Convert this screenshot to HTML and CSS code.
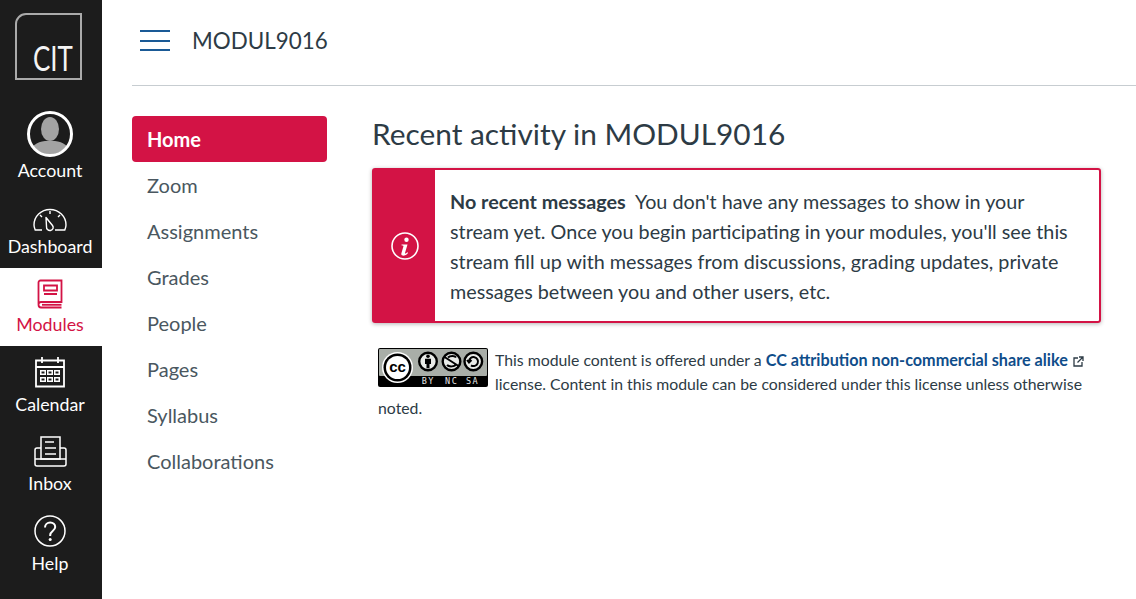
FILE: index.html
```html
<!DOCTYPE html>
<html lang="en">
<head>
    <meta charset="UTF-8">
    <title>MODUL9016</title>
    <link rel="stylesheet" href="styles.css">
</head>
<body>
<nav class="sidebar">
    <a class="logo" href="#"><span>CIT</span></a>
    <a class="side-item account" href="#">
        <svg class="avatar" width="46" height="46" viewBox="0 0 46 46">
            <defs><clipPath id="round"><circle cx="23" cy="23" r="20.5"/></clipPath></defs>
            <circle cx="23" cy="23" r="21" fill="#1c1c1c"/>
            <g clip-path="url(#round)" fill="#a3a3a3">
                <ellipse cx="23" cy="18" rx="9" ry="12"/>
                <path d="M2 44c1-9 8-13 16-14h10c8 1 15 5 16 14z"/>
            </g>
            <circle cx="23" cy="23" r="21.500" fill="none" stroke="#fff" stroke-width="3"/>
        </svg>
        <span>Account</span>
    </a>
    <a class="side-item dashboard" href="#">
        <svg width="34" height="24" viewBox="0 0 34 24" fill="none" stroke="#fff" stroke-width="1.400">
            <path d="M9 22H2.200C1.400 20 1 18.500 1 17 1 8.500 8 1.500 17 1.500S33 8.500 33 17c0 1.500-.4 3-1.200 5H22"/>
            <path d="M17 3v3M7 7l2 2M27 7l-2 2"/>
            <path d="M13 9.500l6.500 8c1.500 2 .5 4.500-2 5-2.500.3-4.200-1.500-4-4z" stroke-linejoin="round"/>
        </svg>
        <span>Dashboard</span>
    </a>
    <a class="side-item active" href="#">
        <svg width="26" height="30" viewBox="0 0 26 30" fill="none" stroke="#d31345" stroke-width="1.800">
            <path d="M1.500 25V3.500c0-1 .8-2 2-2h21v21.500H4c-1.500 0-2.500 1-2.500 2.500S2.500 28.500 4 28.500h20.500"/>
            <path d="M7 6.500h13v5H7zM7 15h13"/>
            <path d="M5 25.800h19.500"/>
        </svg>
        <span>Modules</span>
    </a>
    <a class="side-item calendar" href="#">
        <svg width="30" height="32" viewBox="0 0 30 32" fill="none" stroke="#fff" stroke-width="1.800">
            <path d="M1 4.500h28v26H1zM1 11h28M7 1v6M23 1v6"/>
            <g fill="#fff" stroke="none">
                <path fill-rule="evenodd" d="M5 14h6v5H5zm1.500 1.500v2h3v-2zM12 14h6v5h-6zm1.500 1.500v2h3v-2zM19 14h6v5h-6zm1.500 1.500v2h3v-2zM5 21h6v5H5zm1.500 1.500v2h3v-2zM12 21h6v5h-6zm1.500 1.500v2h3v-2zM19 21h6v5h-6zm1.500 1.500v2h3v-2z"/>
            </g>
        </svg>
        <span>Calendar</span>
    </a>
    <a class="side-item inbox" href="#">
        <svg width="33" height="31" viewBox="0 0 33 31" fill="none" stroke="#fff" stroke-width="1.500">
            <path d="M7 23V1h19v22z"/>
            <path d="M11 6h9M11 12h11M11 18h11"/>
            <path d="M7 12H3c-1.200 0-2 .8-2 2v14c0 1 .8 2 2 2h27c1.200 0 2-1 2-2V14c0-1.200-.8-2-2-2h-4"/>
            <path d="M1 23h31"/>
        </svg>
        <span>Inbox</span>
    </a>
    <a class="side-item help" href="#">
        <svg width="32" height="32" viewBox="0 0 32 32" fill="none" stroke="#fff" stroke-width="1.500">
            <circle cx="16" cy="16" r="15"/>
            <path d="M11 12.500c0-3 2.300-5 5.200-5s5 2 5 4.500c0 4-5 4-5 8v1" stroke-width="2"/>
            <circle cx="16.200" cy="24.500" r="1.500" fill="#fff" stroke="none"/>
        </svg>
        <span>Help</span>
    </a>
</nav>

<div class="page">
    <header class="topbar">
        <button class="burger" aria-label="Menu"><i></i><i></i><i></i></button>
        <h1>MODUL9016</h1>
    </header>
    <div class="columns">
        <ul class="module-nav">
            <li class="current"><a href="#">Home</a></li>
            <li><a href="#">Zoom</a></li>
            <li><a href="#">Assignments</a></li>
            <li><a href="#">Grades</a></li>
            <li><a href="#">People</a></li>
            <li><a href="#">Pages</a></li>
            <li><a href="#">Syllabus</a></li>
            <li><a href="#">Collaborations</a></li>
        </ul>
        <main class="content">
            <h2>Recent activity in MODUL9016</h2>
            <div class="alert">
                <div class="alert-icon">
                    <svg width="28" height="28" viewBox="0 0 28 28">
                        <circle cx="14" cy="14" r="13" fill="none" stroke="#fff" stroke-width="1.600"/>
                        <circle cx="15.500" cy="7.800" r="2.200" fill="#fff"/>
                        <path d="M10.500 12.500h6l-2.500 8.500c-.2.800.6.900 2.500-.8l.6.700c-2 2.500-4 3-5.500 2.700-1.200-.3-1.500-1.200-1.200-2.400l2-6.800c.2-.8-.4-1-1.700-.9z" fill="#fff"/>
                    </svg>
                </div>
                <p><strong>No recent messages</strong>&nbsp; You don't have any messages to show in your stream yet. Once you begin participating in your modules, you'll see this stream fill up with messages from discussions, grading updates, private messages between you and other users, etc.</p>
            </div>
            <p class="license">
                <svg class="cc" width="110" height="39" viewBox="0 0 110 39">
                    <rect width="110" height="39" rx="2" fill="#000"/>
                    <rect x="1" y="1" width="108" height="27" rx="1" fill="#a9aea8"/>
                    <circle cx="19.500" cy="19.500" r="15.500" fill="#fff"/>
                    <circle cx="19.500" cy="19.500" r="14" fill="#000"/>
                    <circle cx="19.500" cy="19.500" r="11.500" fill="#fff"/>
                    <text x="19.500" y="24" class="cc-big">cc</text>
                    <g fill="#e9ebe8" stroke="#000" stroke-width="2.400">
                        <circle cx="50" cy="13.500" r="8.800"/>
                        <circle cx="73.500" cy="13.500" r="8.800"/>
                        <circle cx="95.300" cy="13.500" r="8.800"/>
                    </g>
                    <circle cx="50" cy="8.300" r="1.800" fill="#000"/>
                    <path d="M47 10.700h6v5.300h-1.500v4.300h-3V16H47z" fill="#000"/>
                    <path d="M66.500 9l14 9M70 9.500c2-2 7-2 8 0M69 17c2 2 8 2 9-1" fill="none" stroke="#000" stroke-width="2"/>
                    <path d="M91 13.500a4.500 4.500 0 1 1 2 3.800M89 12l2 2.500 2.500-2.500" fill="none" stroke="#000" stroke-width="2"/>
                    <text x="50.300" y="36.300" class="cc-small">BY</text>
                    <text x="73.700" y="36.300" class="cc-small">NC</text>
                    <text x="94.500" y="36.300" class="cc-small">SA</text>
                </svg>
                This module content is offered under a <a href="#">CC attribution non-commercial share alike</a>
                <svg class="ext" width="11" height="11" viewBox="0 0 11 11" fill="none" stroke="#2d3b45" stroke-width="1.300">
                    <path d="M5 2H1v8h8V6M6 1h4v4M10 1L4.500 6.500"/>
                </svg>
                license. Content in this module can be considered under this license unless otherwise noted.
            </p>
        </main>
    </div>
</div>
</body>
</html>
```

FILE: styles.css
```css
* {
    box-sizing: border-box;
}

html, body {
    height: 100%;
}

body {
    margin: 0;
    display: flex;
    overflow: hidden;
    font-family: Lato, "Liberation Sans", sans-serif;
    color: #2d3b45;
    background: #fff;
}

a {
    text-decoration: none;
}

.sidebar {
    width: 102px;
    flex-shrink: 0;
    background: #1c1c1c;
    display: flex;
    flex-direction: column;
}

.logo {
    display: flex;
    align-items: flex-end;
    justify-content: flex-end;
    width: 67px;
    height: 67px;
    margin: 13px 0 0 15px;
    padding: 0 7px 3px 0;
    border: 2px solid #aaa;
    border-top-left-radius: 11px;
    color: #f4f4f4;
    font-size: 35px;
    line-height: 1;
}

.logo span {
    display: block;
    transform: scaleX(0.74);
    transform-origin: right bottom;
}

.side-item {
    display: flex;
    flex-direction: column;
    align-items: center;
    padding-right: 2px;
    color: #fff;
    font-size: 17.800px;
    line-height: 22px;
}

.side-item svg {
    display: block;
}

.account {
    height: 110px;
    padding-top: 31px;
}

.account svg {
    margin-bottom: 2px;
}

.dashboard {
    height: 78px;
    padding-top: 18px;
}

.dashboard svg {
    margin-bottom: 3px;
}

.active {
    height: 78px;
    padding-top: 11px;
    background: #fff;
    color: #d31345;
}

.active svg {
    margin-bottom: 4px;
}

.calendar {
    height: 79px;
    padding-top: 10px;
}

.calendar svg {
    margin-bottom: 5px;
}

.inbox {
    height: 79px;
    padding-top: 11px;
}

.inbox svg {
    margin-bottom: 5px;
}

.help {
    padding-top: 11px;
}

.help svg {
    margin-bottom: 5px;
}

.page {
    flex: 1;
    min-width: 0;
    padding-left: 30px;
}

.topbar {
    height: 86px;
    display: flex;
    align-items: center;
    padding: 0 0 4px 8px;
    border-bottom: 1px solid #c7cdd1;
}

.burger {
    width: 30px;
    height: 21px;
    padding: 0;
    border: 0;
    background: none;
    display: flex;
    flex-direction: column;
    justify-content: space-between;
}

.burger i {
    display: block;
    height: 2px;
    background: #1a5a96;
}

.topbar h1 {
    margin: 0 0 0 22px;
    font-size: 22.400px;
    font-weight: 400;
    line-height: 30px;
}

.columns {
    display: flex;
    padding-top: 30px;
}

.module-nav {
    width: 195px;
    flex-shrink: 0;
    margin: 0;
    padding: 0;
    list-style: none;
    font-size: 20px;
}

.module-nav a {
    display: block;
    height: 46px;
    padding: 0 15px;
    line-height: 46px;
    color: #4a5760;
}

.module-nav .current a {
    background: #d31345;
    color: #fff;
    font-weight: 700;
    border-radius: 4px;
}

.content {
    width: 729px;
    margin-left: 45px;
}

.content h2 {
    margin: -1px 0 0;
    font-size: 29.850px;
    font-weight: 400;
    line-height: 38px;
}

.alert {
    display: flex;
    margin-top: 15px;
    height: 155px;
    border: 2px solid #d31345;
    border-radius: 3px;
    box-shadow: 0 1px 4px rgba(0, 0, 0, 0.3);
}

.alert-icon {
    width: 61px;
    flex-shrink: 0;
    background: #d31345;
    display: flex;
    align-items: center;
    justify-content: center;
}

.alert p {
    margin: 0;
    padding: 17px 20px 0 15px;
    font-size: 19.750px;
    line-height: 30px;
}

.license {
    margin: 25px 0 0 6px;
    width: 712px;
    font-size: 15.800px;
    line-height: 24px;
}

.license a {
    color: #0f4d8a;
    font-size: 16.200px;
    font-weight: 700;
}

.cc {
    float: left;
    margin-right: 7px;
}

.ext {
    vertical-align: -1px;
    margin-left: 1px;
}

.cc-big {
    font: 700 15px "Liberation Sans", sans-serif;
    text-anchor: middle;
    fill: #000;
}

.cc-small {
    font: 400 8.500px "DejaVu Sans Mono", monospace;
    letter-spacing: 1.500px;
    text-anchor: middle;
    fill: #e8e8e8;
}
```
